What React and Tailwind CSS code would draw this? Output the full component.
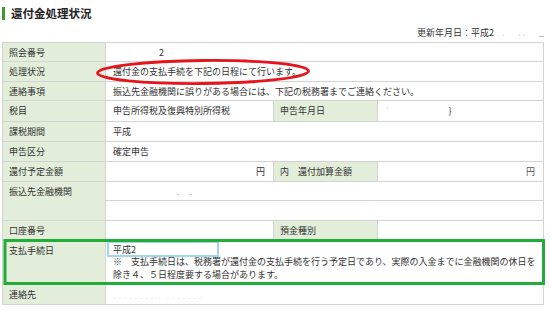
import React from "react";

const L = "bg-[#e2eeda] border border-[#d3d3d3] align-top pl-[6px] pt-[4px] text-[#333] whitespace-nowrap";
const V = "bg-white border border-[#d3d3d3] align-top pl-[7px] pt-[4px] pr-[8px] text-[#333] whitespace-nowrap";

export default function App() {
  return (
    <div
      className="relative w-[550px] h-[311px] overflow-hidden bg-white text-[9px] leading-[12px]"
      style={{ fontFamily: '"Noto Sans CJK JP", "Noto Sans", sans-serif' }}
    >
      <div className="flex items-center gap-[6px] pl-[2px] pt-[7px] h-[20px]">
        <div className="w-[3px] h-[13px] bg-[#3f9b2f]" />
        <div className="text-[11.5px] leading-[13px] font-bold text-[#222]">還付金処理状況</div>
      </div>
      <div className="flex justify-end pr-[6px] mt-[7px] h-[14px] text-[#333]">
        <span>更新年月日：平成2</span>
        <span className="text-[#c8c8c8] w-[50px] flex justify-between pl-[8px]">
          <span>.</span><span>. .</span><span className="text-[#888]">_</span>
        </span>
      </div>
      <table className="ml-[2px] mt-[1px] table-fixed border-collapse w-[541px]">
        <colgroup>
          <col className="w-[103px]" />
          <col className="w-[168px]" />
          <col className="w-[104px]" />
          <col className="w-[166px]" />
        </colgroup>
        <tbody>
          <tr className="h-[19px]">
            <td className={L}>照会番号</td>
            <td className={V} colSpan={3}><span className="pl-[46px]">2</span></td>
          </tr>
          <tr className="h-[20px]">
            <td className={L}>処理状況</td>
            <td className={V} colSpan={3}>還付金の支払手続を下記の日程にて行います。</td>
          </tr>
          <tr className="h-[19px]">
            <td className={L}>連絡事項</td>
            <td className={V} colSpan={3}>振込先金融機関に誤りがある場合には、下記の税務署までご連絡ください。</td>
          </tr>
          <tr className="h-[21px]">
            <td className={L}>税目</td>
            <td className={V}>申告所得税及復興特別所得税</td>
            <td className={L}>申告年月日</td>
            <td className={V}>
              <span className="text-[#ddd] pl-[1px]">'</span>
              <span className="pl-[60px] text-[#444]">}</span>
            </td>
          </tr>
          <tr className="h-[20px]">
            <td className={L}>課税期間</td>
            <td className={V} colSpan={3}>平成</td>
          </tr>
          <tr className="h-[20px]">
            <td className={L}>申告区分</td>
            <td className={V} colSpan={3}>確定申告</td>
          </tr>
          <tr className="h-[20px]">
            <td className={L}>還付予定金額</td>
            <td className={V + " text-right"}>円</td>
            <td className={L}>内　還付加算金額</td>
            <td className={V + " text-right"}><span className="text-[#555]">円</span></td>
          </tr>
          <tr className="h-[19px]">
            <td className={L} rowSpan={2}>振込先金融機関</td>
            <td className={V} colSpan={3}>
              <span className="pl-[64px] text-[#aaa]">.</span>
              <span className="pl-[10px] text-[#aaa]">.</span>
            </td>
          </tr>
          <tr className="h-[20px]">
            <td className={V} colSpan={3}></td>
          </tr>
          <tr className="h-[20px]">
            <td className={L}>口座番号</td>
            <td className={V}></td>
            <td className={L}>預金種別</td>
            <td className={V}></td>
          </tr>
          <tr className="h-[44px]">
            <td className={L}>支払手続日</td>
            <td className="bg-white border border-[#d3d3d3] align-top pl-[7px] pt-[3px] pr-[8px] text-[#333] whitespace-nowrap leading-[13px]" colSpan={3}>
              <div className="h-[11px] leading-[11px]">平成2</div>
              <div>※　支払手続日は、税務署が還付金の支払手続を行う予定日であり、実際の入金までに金融機関の休日を</div>
              <div>除き４、５日程度要する場合があります。</div>
            </td>
          </tr>
          <tr className="h-[20px]">
            <td className={L}>連絡先</td>
            <td className={V} colSpan={3}>
              <div className="pt-[6px] text-[#ccc] text-[6px] leading-[6px] tracking-[1px]">- - - - - - - -&nbsp;&nbsp;-&nbsp;&nbsp;- - - - - - -</div>
            </td>
          </tr>
        </tbody>
      </table>

      <svg className="absolute left-0 top-0 pointer-events-none" width="550" height="311">
        <ellipse cx="203" cy="72" rx="105.5" ry="11.5" fill="none" stroke="#e8141b" strokeWidth="2.8" transform="rotate(-0.5 203 72)" />
        <rect x="108" y="242" width="110" height="14" fill="none" stroke="#9fd6ea" strokeWidth="2" />
        <rect x="5" y="240.5" width="538.5" height="43" fill="none" stroke="#22ac38" strokeWidth="3" />
      </svg>
    </div>
  );
}
